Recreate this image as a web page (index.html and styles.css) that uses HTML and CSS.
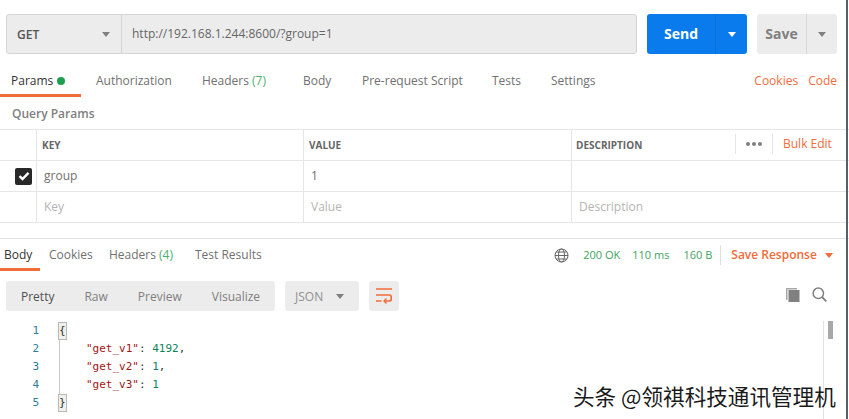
FILE: index.html
```html
<!DOCTYPE html>
<html lang="zh">
<head>
<meta charset="utf-8">
<title>Postman</title>
<link rel="stylesheet" href="styles.css">
</head>
<body>
<div class="app">
  <div class="urlbar">
    <div class="urlgroup">
      <div class="method"><span>GET</span><i class="caret grey"></i></div>
      <div class="url">http://192.168.1.244:8600/?group=1</div>
    </div>
    <div class="send"><span class="send-label">Send</span><span class="send-drop"><i class="caret white"></i></span></div>
    <div class="save"><span class="save-label">Save</span><span class="save-drop"><i class="caret grey"></i></span></div>
  </div>

  <div class="reqtabs">
    <div class="tab active t-params">Params <b class="dot"></b></div>
    <div class="tab t-auth">Authorization</div>
    <div class="tab t-head">Headers <em>(7)</em></div>
    <div class="tab t-body">Body</div>
    <div class="tab t-pre">Pre-request Script</div>
    <div class="tab t-tests">Tests</div>
    <div class="tab t-set">Settings</div>
    <div class="links"><span>Cookies</span><span>Code</span></div>
  </div>

  <div class="qp">Query Params</div>

  <div class="table">
    <div class="row head">
      <div class="cell chk"></div>
      <div class="cell key">KEY</div>
      <div class="cell val">VALUE</div>
      <div class="cell desc"><span>DESCRIPTION</span>
        <div class="tools"><span class="dots"><b></b><b></b><b></b></span><span class="bulk">Bulk Edit</span></div>
      </div>
    </div>
    <div class="row">
      <div class="cell chk"><span class="checkbox"><svg width="12" height="10" viewBox="0 0 12 10"><path d="M1.5 5.2 4.5 8 10.5 1.8" fill="none" stroke="#fff" stroke-width="2.4"/></svg></span></div>
      <div class="cell key data">group</div>
      <div class="cell val data">1</div>
      <div class="cell desc"></div>
    </div>
    <div class="row">
      <div class="cell chk"></div>
      <div class="cell key ph">Key</div>
      <div class="cell val ph">Value</div>
      <div class="cell desc ph">Description</div>
    </div>
  </div>

  <div class="response">
    <div class="restabs">
      <div class="rtab active r-body">Body</div>
      <div class="rtab r-cook">Cookies</div>
      <div class="rtab r-head">Headers <em>(4)</em></div>
      <div class="rtab r-test">Test Results</div>
      <div class="status">
        <svg class="globe" width="15" height="15" viewBox="0 0 15 15" fill="none" stroke="#666" stroke-width="1"><circle cx="7.5" cy="7.5" r="6.5"/><ellipse cx="7.5" cy="7.5" rx="3" ry="6.5"/><path d="M1 7.5h13M2 4h11M2 11h11"/></svg>
        <span class="s-ok">200 OK</span><span class="s-ms">110 ms</span><span class="s-b">160 B</span>
        <span class="saveres">Save Response <i class="caret orange"></i></span>
      </div>
    </div>

    <div class="toolbar">
      <div class="modes"><span class="m-on">Pretty</span><span>Raw</span><span>Preview</span><span>Visualize</span></div>
      <div class="lang"><span>JSON</span><i class="caret grey"></i></div>
      <div class="wrap"><svg width="16" height="16" viewBox="0 0 16 16" fill="none" stroke="#f26b3a" stroke-width="1.7"><path d="M0 1h16M0 7h13.5c2.5 0 2.5 6 0 6H8M0 13h5.5"/><path d="M10.5 10.5 8 13l2.5 2.5" stroke-width="1.4"/></svg></div>
      <div class="icons">
        <svg width="15" height="15" viewBox="0 0 15 15"><path d="M1 1h11v1.5H2.5V13H1z" fill="#a8a8a8"/><rect x="3.5" y="3" width="11" height="12" fill="#808080"/></svg>
        <svg width="15" height="15" viewBox="0 0 15 15" fill="none" stroke="#808080" stroke-width="1.5"><circle cx="6.3" cy="6.3" r="5.2"/><path d="M10 10l4.3 4.3" stroke-width="1.8"/></svg>
      </div>
    </div>

    <div class="code">
      <div class="gutter"><div>1</div><div>2</div><div>3</div><div>4</div><div>5</div></div>
      <div class="lines">
        <div class="line"><span class="brace">{</span></div>
        <div class="line in"><span class="str">"get_v1"</span>: <span class="num">4192</span>,</div>
        <div class="line in"><span class="str">"get_v2"</span>: <span class="num">1</span>,</div>
        <div class="line in"><span class="str">"get_v3"</span>: <span class="num">1</span></div>
        <div class="line"><span class="brace">}</span></div>
      </div>
      <div class="scroll"><div class="thumb"></div></div>
    </div>
  </div>
  <div class="watermark">头条 @领祺科技通讯管理机</div>
</div>
</body>
</html>
```
FILE: styles.css
```css
* { box-sizing: border-box; }
html, body { margin: 0; padding: 0; background: #fff; }
body { width: 849px; height: 419px; overflow: hidden; font: 12px "Open Sans", "Liberation Sans", sans-serif; color: #808080; }
.app { position: relative; width: 849px; height: 419px; overflow: hidden; }
.app::after { content: ""; position: absolute; top: 0; right: 1px; width: 2px; height: 419px; background: #5a5f66; }
em { font-style: normal; color: #4caf6e; }

.caret { display: inline-block; width: 0; height: 0; border-left: 4.5px solid transparent; border-right: 4.5px solid transparent; border-top: 5px solid #808080; }
.caret.white { border-top-color: #fff; }
.caret.orange { border-top-color: #f26b3a; }

.urlbar { display: flex; height: 40px; margin: 14px 0 0 6px; }
.urlgroup { display: flex; width: 631px; background: #ececec; border: 1px solid #d4d4d4; border-radius: 3px; color: #505050; }
.method { width: 115px; flex: none; display: flex; align-items: center; justify-content: space-between; padding: 0 11px 0 10px; border-right: 1px solid #d4d4d4; font-weight: 600; color: #555; }
.url { padding-left: 10px; line-height: 38px; color: #666; }
.send { width: 100px; margin-left: 10px; display: flex; background: #097bed; border-radius: 3px; color: #fff; font-size: 14px; font-weight: 700; }
.send-label { width: 69px; text-align: center; line-height: 40px; border-right: 1px solid #0a6fd6; }
.send-drop { flex: 1; display: flex; align-items: center; justify-content: center; }
.save { width: 80px; margin-left: 10px; display: flex; background: #ececec; border-radius: 3px; font-size: 14px; font-weight: 700; color: #808080; }
.save-label { width: 50px; text-align: center; line-height: 40px; border-right: 1px solid #d8d8d8; }
.save-drop { flex: 1; display: flex; align-items: center; justify-content: center; }

.reqtabs { display: flex; height: 42px; margin-top: 12px; line-height: 30px; }
.tab { height: 31px; color: #707070; }
.tab.active { border-bottom: 3px solid #f26b3a; color: #333; }
.t-params { width: 81px; padding-left: 11px; }
.dot { display: inline-block; width: 8px; height: 8px; border-radius: 50%; background: #1f9e4d; margin-left: 1px; }
.t-auth { margin-left: 15px; width: 106px; }
.t-head { width: 101px; }
.t-body { width: 59px; }
.t-pre { width: 130px; }
.t-tests { width: 59px; }
.t-set { width: 80px; }
.links { margin-left: auto; margin-right: 12px; display: flex; gap: 10px; color: #f26b3a; }

.qp { height: 33px; margin-top: -12px; padding: 7px 0 0 12px; font-weight: 600; color: #808080; line-height: 22px; }

.table { border-top: 1px solid #e6e6e6; }
.row { display: flex; height: 31px; border-bottom: 1px solid #e6e6e6; }
.row.head { font-size: 10px; font-weight: 700; color: #666; }
.cell { border-right: 1px solid #e6e6e6; line-height: 30px; padding-left: 7px; }
.chk { width: 37px; padding: 0 4px 0 0; display: flex; align-items: center; justify-content: flex-end; }
.key { width: 267px; }
.val { width: 268px; }
.desc { flex: 1; border-right: 0; display: flex; justify-content: space-between; padding-left: 7px; }
.head .key, .head .val { padding-left: 5px; }
.head .desc { padding-left: 4px; }
.data { color: #707070; }
.ph { color: #b4b4b4; }
.checkbox { width: 17px; height: 17px; background: #282828; border-radius: 2px; display: flex; align-items: center; justify-content: center; }
.tools { display: flex; align-items: center; height: 20px; margin-top: 4px; width: 114px; border-left: 1px solid #e6e6e6; }
.dots { width: 37px; display: flex; gap: 2px; justify-content: center; border-right: 1px solid #e6e6e6; height: 20px; align-items: center; }
.dots b { width: 4px; height: 4px; border-radius: 50%; background: #808080; }
.bulk { margin-left: 10px; font-size: 12px; font-weight: 400; color: #f26b3a; line-height: 20px; }

.response { margin-top: 15px; border-top: 1px solid #e2e2e2; }
.restabs { display: flex; height: 42px; align-items: flex-start; line-height: 32px; }
.rtab { height: 32px; color: #707070; }
.rtab.active { color: #333; border-bottom: 3px solid #f26b3a; }
.r-body { width: 40px; padding-left: 4px; }
.r-cook { margin-left: 9px; width: 60px; }
.r-head { width: 86px; }
.r-test { width: 100px; }
.status { margin-left: auto; display: flex; align-items: center; height: 32px; color: #3fa35f; font-size: 11px; }
.globe { margin-right: 14px; }
.s-ms { margin-left: 12px; }
.s-b { margin-left: 14px; }
.saveres { margin-left: 8px; padding: 0 16px 0 10px; height: 20px; line-height: 20px; border-left: 1px solid #e0e0e0; color: #f26b3a; font-weight: 600; font-size: 12px; }
.saveres .caret { margin-left: 5px; vertical-align: 1px; }

.toolbar { display: flex; height: 30px; margin-left: 6px; }
.modes { width: 269px; display: flex; align-items: center; background: #ececec; border-radius: 3px; padding-left: 15px; color: #808080; }
.modes span { margin-right: 30px; }
.modes .m-on { color: #505050; }
.lang { width: 74px; margin-left: 10px; background: #ececec; border-radius: 3px; display: flex; align-items: center; justify-content: space-between; padding: 0 15px 0 10px; color: #909090; }
.wrap { width: 30px; margin-left: 10px; background: #ececec; border-radius: 3px; display: flex; align-items: center; justify-content: center; }
.icons { margin-left: auto; margin-right: 22px; display: flex; gap: 12px; margin-top: 6px; height: 15px; }

.code { display: flex; margin-top: 11px; font: 11px/18px "DejaVu Sans Mono", monospace; color: #333; }
.gutter { width: 39px; text-align: right; color: #2b7d9c; }
.lines { margin-left: 20px; }
.line { height: 18px; white-space: pre; }
.line.in { padding-left: 26px; border-left: 1px solid #c9c9c9; }
.brace { display: inline-block; width: 7px; height: 16px; background: #eef2ea; outline: 1px solid #b8b8b8; line-height: 16px; }
.str { color: #a31515; }
.num { color: #098658; }
.scroll { margin-left: auto; margin-right: 13px; margin-top: -1px; width: 13px; height: 100px; border-left: 1px solid #e2e2e2; }
.thumb { width: 5px; height: 18px; margin-left: 4px; background: #a8a8a8; }

.watermark { position: absolute; left: 573px; top: 381px; font: 21.6px/30px "Noto Sans CJK SC", sans-serif; color: #1a1a1a; text-shadow: 1px 1px 0 #fff, -1px -1px 0 #fff, 1px 0 0 #fff, 0 1px 0 #fff; white-space: nowrap; }
```
